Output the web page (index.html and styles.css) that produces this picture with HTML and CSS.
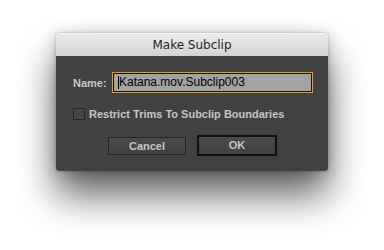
FILE: index.html
```html
<!DOCTYPE html>
<html>
<head>
<meta charset="utf-8">
<link rel="stylesheet" href="styles.css">
</head>
<body>
<div class="stage">
  <div class="dialog">
    <div class="titlebar">Make Subclip</div>
    <div class="content">
      <div class="name-row">
        <span class="label">Name:</span>
        <div class="input"><span class="caret"></span>Katana.mov.Subclip003</div>
      </div>
      <div class="check-row">
        <span class="checkbox"></span>
        <span class="label">Restrict Trims To Subclip Boundaries</span>
      </div>
      <div class="buttons">
        <div class="btn">Cancel</div>
        <div class="btn btn-default">OK</div>
      </div>
    </div>
  </div>
</div>
</body>
</html>
```
FILE: styles.css
```css
html, body {
  margin: 0;
  padding: 0;
  background: #ffffff;
  width: 384px;
  height: 250px;
  overflow: hidden;
}
.stage {
  padding: 33px 0 0 56px;
}
.dialog {
  width: 272px;
  border-radius: 4px 4px 3px 3px;
  box-shadow: 0 24px 38px rgba(0, 0, 0, 0.62), 0 2px 14px rgba(0, 0, 0, 0.22), 0 0 2px rgba(0, 0, 0, 0.3);
  overflow: hidden;
  font-family: "Liberation Sans", Arial, sans-serif;
}
.titlebar {
  height: 23px;
  line-height: 23px;
  text-align: center;
  font-family: "DejaVu Sans", sans-serif;
  font-size: 12px;
  color: #262626;
  background: linear-gradient(#ececec, #d2d2d2);
  border-top: 1px solid #f6f6f6;
  box-sizing: border-box;
}
.content {
  background: #414141;
  height: 115px;
  box-sizing: border-box;
  padding: 16px 0 0 17px;
}
.label {
  font-weight: bold;
  font-size: 11px;
  color: #c3c6ca;
}
.name-row {
  display: flex;
  align-items: center;
  height: 21px;
}
.name-row .label {
  width: 39px;
}
.input {
  width: 201px;
  height: 21px;
  box-sizing: border-box;
  border: 1px solid #e69a17;
  box-shadow: inset 0 0 0 1px #111;
  background: #a3a3a3;
  color: #000;
  font-size: 12px;
  line-height: 19px;
  padding-left: 5px;
  display: flex;
  align-items: center;
}
.caret {
  width: 1px;
  height: 13px;
  background: #000;
}
.check-row {
  display: flex;
  align-items: center;
  margin-top: 15px;
  height: 12px;
}
.checkbox {
  width: 12px;
  height: 12px;
  box-sizing: border-box;
  border: 1px solid #262626;
  background: #454545;
  margin-right: 4px;
}
.buttons {
  display: flex;
  align-items: center;
  margin-top: 15px;
  padding-left: 35px;
  gap: 11px;
  height: 21px;
}
.btn {
  width: 78px;
  height: 18px;
  box-sizing: border-box;
  border: 1px solid #252525;
  background: linear-gradient(#4a4a4a, #424242);
  color: #c3c6ca;
  font-weight: bold;
  font-size: 11px;
  text-align: center;
  line-height: 16px;
}
.btn-default {
  width: 80px;
  height: 21px;
  border: 2px solid #0f0f0f;
  line-height: 17px;
}
```
